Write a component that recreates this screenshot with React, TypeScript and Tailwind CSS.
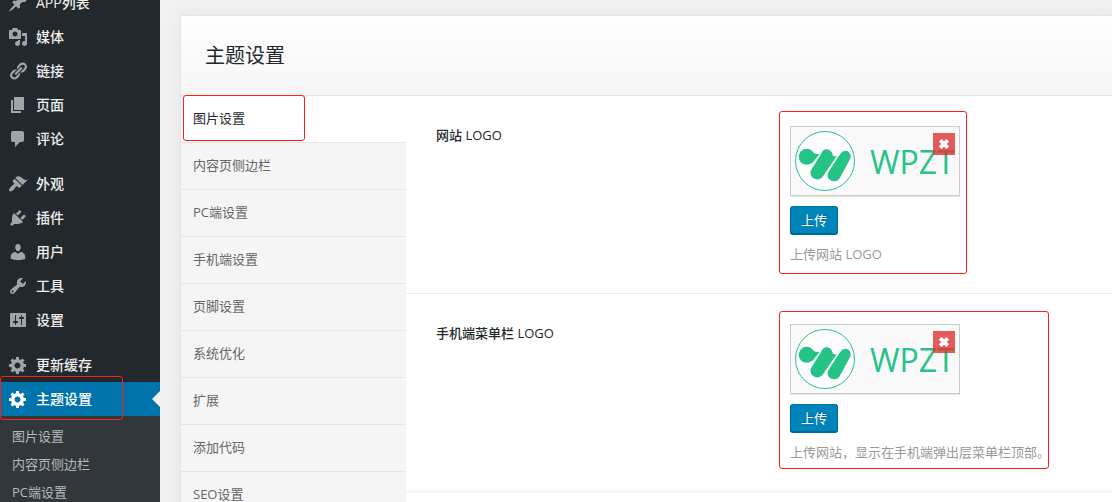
import React from "react";
import clsx from "clsx";

const ICONS = {
  pin: "M10.44 3.02l1.82-1.82 6.36 6.35-1.83 1.82c-1.05-.68-2.48-.57-3.41.36l-.75.75c-.92.93-1.04 2.35-.35 3.41l-1.83 1.82-2.41-2.41-2.8 2.79c-.42.42-3.38 2.71-3.8 2.29s1.86-3.39 2.28-3.81l2.79-2.79L4.1 9.36l1.83-1.82c1.05.69 2.48.57 3.4-.36l.75-.75c.93-.92 1.05-2.35.36-3.41z",
  media: "M13 11V4c0-.55-.45-1-1-1h-1.67L9 1H5L3.67 3H2c-.55 0-1 .45-1 1v7c0 .55.45 1 1 1h10c.55 0 1-.45 1-1zM7 4.5c1.38 0 2.5 1.12 2.5 2.5S8.38 9.5 7 9.5 4.5 8.38 4.5 7 5.62 4.5 7 4.5zM14 6h5v10.5c0 1.38-1.12 2.5-2.5 2.5S14 17.88 14 16.5s1.12-2.5 2.5-2.5c.17 0 .34.02.5.05V9h-3V6zm-4 8.05V13h2v3.5c0 1.38-1.12 2.5-2.5 2.5S7 17.88 7 16.5 8.12 14 9.5 14c.17 0 .34.02.5.05z",
  link: "M17.74 2.76c1.68 1.69 1.68 4.41 0 6.1l-1.53 1.52c-1.12 1.12-2.7 1.47-4.14 1.09l2.62-2.61.76-.77.76-.76c.84-.84.84-2.2 0-3.04-.84-.85-2.2-.85-3.04 0l-.77.76-3.38 3.38c-.37-1.44-.02-3.02 1.1-4.14l1.52-1.53c1.69-1.68 4.42-1.68 6.1 0zM8.59 13.43l5.34-5.34c.42-.42.42-1.1 0-1.52-.44-.43-1.13-.39-1.53 0l-5.33 5.34c-.42.42-.42 1.1 0 1.52.44.43 1.13.39 1.52 0zm-.76 2.29l4.14-4.15c.38 1.44.03 3.02-1.09 4.14l-1.52 1.53c-1.69 1.68-4.41 1.68-6.1 0-1.68-1.68-1.68-4.42 0-6.1l1.53-1.52c1.12-1.12 2.7-1.47 4.14-1.1l-4.14 4.15c-.85.84-.85 2.2 0 3.05.84.84 2.2.84 3.04 0z",
  page: "M6 15V2h10v13H6zm-1 1h8v2H3V5h2v11z",
  comment: "M5 2h9c1.1 0 2 .9 2 2v7c0 1.1-.9 2-2 2h-2l-5 5v-5H5c-1.1 0-2-.9-2-2V4c0-1.1.9-2 2-2z",
  brush: "M14.48 11.06L7.41 3.99l1.5-1.5c.5-.56 2.3-.47 3.51.32 1.21.8 1.43 1.28 2.91 2.1 1.18.64 2.45 1.26 4.45.85zm-.71.71L6.7 4.7 4.93 6.47c-.39.39-.39 1.02 0 1.41l1.06 1.06c.39.39.39 1.03 0 1.42-.6.6-1.43 1.11-2.21 1.69-.35.26-.7.53-1.01.84C1.43 14.23.4 16.08 1.4 17.07c.99 1 2.84-.03 4.18-1.36.31-.31.58-.66.85-1.02.57-.78 1.08-1.61 1.69-2.21.39-.39 1.02-.39 1.41 0l1.06 1.06c.39.39 1.02.39 1.41 0z",
  plug: "M13.11 4.36L9.87 7.6 8 5.73l3.24-3.24c.35-.34 1.05-.2 1.56.32.52.51.66 1.21.31 1.55zm-8 1.77l.91-1.12 9.01 9.01-1.19.84c-.71.71-2.63 1.16-3.82 1.16H6.14L4.9 17.26c-.59.59-1.54.59-2.12 0-.59-.58-.59-1.53 0-2.12l1.24-1.24v-3.88c0-1.13.4-3.19 1.09-3.89zm7.26 3.97l3.24-3.24c.34-.35 1.04-.21 1.55.31.52.51.66 1.21.31 1.55l-3.24 3.25z",
  user: "M10 9.25c-2.27 0-2.73-3.44-2.73-3.44C7 4.02 7.82 2 9.97 2c2.16 0 2.98 2.02 2.71 3.81 0 0-.41 3.44-2.68 3.44zm0 2.57L12.72 10c2.39 0 4.52 2.33 4.52 4.53v2.49s-3.65 1.13-7.24 1.13c-3.65 0-7.24-1.13-7.24-1.13v-2.49c0-2.25 1.94-4.48 4.47-4.48z",
  wrench: "M16.68 9.77c-1.34 1.34-3.3 1.67-4.95.99l-5.41 6.52c-.99.99-2.59.99-3.58 0s-.99-2.59 0-3.57l6.52-5.42c-.68-1.65-.35-3.61.99-4.95 1.28-1.28 3.12-1.62 4.72-1.06l-2.89 2.89 2.82 2.82 2.86-2.87c.53 1.58.18 3.39-1.08 4.65zM3.81 16.21c.4.39 1.04.39 1.43 0 .4-.4.4-1.04 0-1.43-.39-.4-1.03-.4-1.43 0-.39.39-.39 1.03 0 1.43z",
  sliders: "M18 16V4c0-.55-.45-1-1-1H3c-.55 0-1 .45-1 1v12c0 .55.45 1 1 1h14c.55 0 1-.45 1-1zM8 11h1c.55 0 1 .45 1 1s-.45 1-1 1H8v1.5c0 .28-.22.5-.5.5s-.5-.22-.5-.5V13H6c-.55 0-1-.45-1-1s.45-1 1-1h1V5.5c0-.28.22-.5.5-.5s.5.22.5.5V11zm5-2h-1c-.55 0-1-.45-1-1s.45-1 1-1h1V5.5c0-.28.22-.5.5-.5s.5.22.5.5V7h1c.55 0 1 .45 1 1s-.45 1-1 1h-1v5.5c0 .28-.22.5-.5.5s-.5-.22-.5-.5V9z",
  gear: "M18 12h-2.18c-.17.7-.44 1.35-.81 1.93l1.54 1.54-2.1 2.1-1.54-1.54c-.58.36-1.23.63-1.91.79V19H8v-2.18c-.68-.16-1.33-.43-1.91-.79l-1.54 1.54-2.12-2.12 1.54-1.54c-.36-.58-.63-1.23-.79-1.91H1V9.03h2.17c.16-.7.44-1.35.8-1.94L2.43 5.55l2.1-2.1 1.54 1.54c.58-.37 1.24-.64 1.93-.81V2h3v2.18c.68.16 1.33.43 1.91.79l1.54-1.54 2.12 2.12-1.54 1.54c.36.59.64 1.24.8 1.94H18V12zm-8.5 1.5c1.66 0 3-1.34 3-3s-1.34-3-3-3-3 1.34-3 3 1.34 3 3 3z",
};

type IconName = keyof typeof ICONS;

const MENU: { icon: IconName; label: string }[][] = [
  [
    { icon: "pin", label: "APP列表" },
    { icon: "media", label: "媒体" },
    { icon: "link", label: "链接" },
    { icon: "page", label: "页面" },
    { icon: "comment", label: "评论" },
  ],
  [
    { icon: "brush", label: "外观" },
    { icon: "plug", label: "插件" },
    { icon: "user", label: "用户" },
    { icon: "wrench", label: "工具" },
    { icon: "sliders", label: "设置" },
  ],
  [
    { icon: "gear", label: "更新缓存" },
    { icon: "gear", label: "主题设置" },
  ],
];

const TABS = ["图片设置", "内容页侧边栏", "PC端设置", "手机端设置", "页脚设置", "系统优化", "扩展", "添加代码", "SEO设置"];

const ACTIVE_MENU = "主题设置";

// Red outline drawn over an area to point it out
const Highlight = ({ className }: { className: string }) => (
  <span className={clsx("pointer-events-none absolute rounded-[3px] border border-[#ff2015]", className)} />
);

const MenuItem = ({ icon, label }: { icon: IconName; label: string }) => {
  const active = label === ACTIVE_MENU;
  return (
    <li className="relative">
      <a
        href="#"
        className={clsx(
          "flex h-[34px] items-center gap-2 px-2 text-sm font-medium",
          active ? "bg-[#0073aa] text-white" : "text-[#eeeeee]"
        )}
      >
        <svg viewBox="0 0 20 20" className={clsx("size-5 shrink-0", active ? "fill-white" : "fill-[#a0a5aa]")}>
          <path d={ICONS[icon]} />
        </svg>
        {label}
      </a>
      {active && (
        <>
          <span className="absolute top-[9px] right-0 border-8 border-l-0 border-transparent border-r-[#f1f1f1]" />
          <Highlight className="-top-1.5 left-0 h-11 w-[123px]" />
        </>
      )}
    </li>
  );
};

const Sidebar = () => (
  <nav className="-mt-3.5 w-40 shrink-0 bg-[#23282d]">
    <div className="flex flex-col gap-[11px]">
      {MENU.map((group, i) => (
        <ul key={i}>
          {group.map((item) => (
            <MenuItem key={item.label} {...item} />
          ))}
        </ul>
      ))}
    </div>
    <ul className="bg-[#32373c] py-[7px]">
      {TABS.map((tab) => (
        <li key={tab}>
          <a href="#" className="flex h-7 items-center px-3 text-[13px] text-[#b4b9be]">
            {tab}
          </a>
        </li>
      ))}
    </ul>
  </nav>
);

const Logo = () => (
  <div className="flex h-[60px] w-40 items-center gap-[15px] overflow-hidden">
    <svg viewBox="0 0 60 60" className="size-[60px] shrink-0">
      <circle cx="30" cy="30" r="29.5" fill="#fdfdfd" stroke="#26c387" />
      <g fill="#26c387">
        <circle cx="11.7" cy="25.8" r="8" />
        <path d="M15.5 18.8C18 22.600 20.500 23.300 24.600 22.900L17.500 32z" />
        <path d="M25.300 24.300C27 20 29 18.200 31.500 18.200C35 18.200 37 20.500 37.800 24.400C39 25.200 40.500 25.300 41.700 25.200L27.300 46.300A7 7 0 0 1 15.400 41.300C15.600 40 16.200 38.800 17 37.600z" />
        <path d="M42.900 26.200L46.200 22C48.500 19.300 51.500 19 53.800 21C56 23 56.300 26 54.700 28.700L45.200 46.300C43.500 49.600 40.500 51 37 49.900C33 48.500 31.500 45 33.500 41z" />
      </g>
    </svg>
    <span className="pt-0.5 text-[32px] leading-8 text-[#26c387]">WPZT</span>
  </div>
);

const UploadField = ({ title, description, highlight }: { title: string; description: string; highlight: string }) => (
  <section className="flex border-b border-[#eeeeee] p-[30px]">
    <h3 className="w-[354px] shrink-0 text-[13px] leading-[18px] font-medium text-[#23282d]">{title}</h3>
    <div className="relative">
      <div className="relative mb-2.5 w-[170px] border border-[#cccccc] bg-[#f9f9f9] p-1 shadow-[0_1px_0_#e5e5e5]">
        <Logo />
        <button
          type="button"
          aria-label="删除"
          className="absolute top-1.5 right-1 flex size-[22px] items-center justify-center bg-[#dd3333]/80"
        >
          <svg viewBox="0 0 10 10" className="size-2.5 stroke-white" strokeWidth="3.8">
            <path d="M1.300 1.300l7.400 7.400M8.700 1.300l-7.400 7.400" />
          </svg>
        </button>
      </div>
      <button
        type="button"
        className="mb-[11px] block h-7 rounded-[3px] border border-[#006799] border-t-[#0073aa] bg-[#0085ba] px-2.5 text-[13px] leading-[26px] text-white shadow-[0_1px_0_#006799] text-shadow-[0_-1px_1px_#006799]"
      >
        上传
      </button>
      <p className="text-[13px] leading-[18px] text-[#999999]">{description}</p>
      <Highlight className={highlight} />
    </div>
  </section>
);

export default function App() {
  return (
    <div className="flex h-screen overflow-hidden bg-[#f1f1f1] font-['Open_Sans','Noto_Sans_CJK_SC',sans-serif]">
      <Sidebar />
      <main className="min-w-0 flex-1 pt-[15px] pl-5">
        <div className="border border-r-0 border-[#e5e5e5] bg-white shadow-[0_0_20px_rgba(0,0,0,0.05)]">
          <header className="border-b border-[#e5e5e5] bg-linear-to-b from-[#fefefe] to-[#f5f5f5] p-6">
            <h1 className="text-xl leading-[31px] text-[#23282d]">主题设置</h1>
          </header>
          <div className="flex">
            <ul className="relative w-[225px] shrink-0 bg-[#f5f5f5]">
              {TABS.map((tab, i) => (
                <li key={tab}>
                  <a
                    href="#"
                    className={clsx(
                      "flex h-[47px] items-center border-b border-[#e5e5e5] px-3 text-[13px]",
                      i === 0 ? "bg-white text-[#23282d]" : "text-[#666666]"
                    )}
                  >
                    {tab}
                  </a>
                </li>
              ))}
              <Highlight className="-top-px left-0.5 h-[46px] w-[122px]" />
            </ul>
            <div className="min-w-0 flex-1">
              <UploadField
                title="网站 LOGO"
                description="上传网站 LOGO"
                highlight="-top-[15px] -left-[11px] h-[163px] w-[188px]"
              />
              <UploadField
                title="手机端菜单栏 LOGO"
                description="上传网站，显示在手机端弹出层菜单栏顶部。"
                highlight="-top-[13px] -left-[11px] h-[158px] w-[270px]"
              />
            </div>
          </div>
        </div>
      </main>
    </div>
  );
}
